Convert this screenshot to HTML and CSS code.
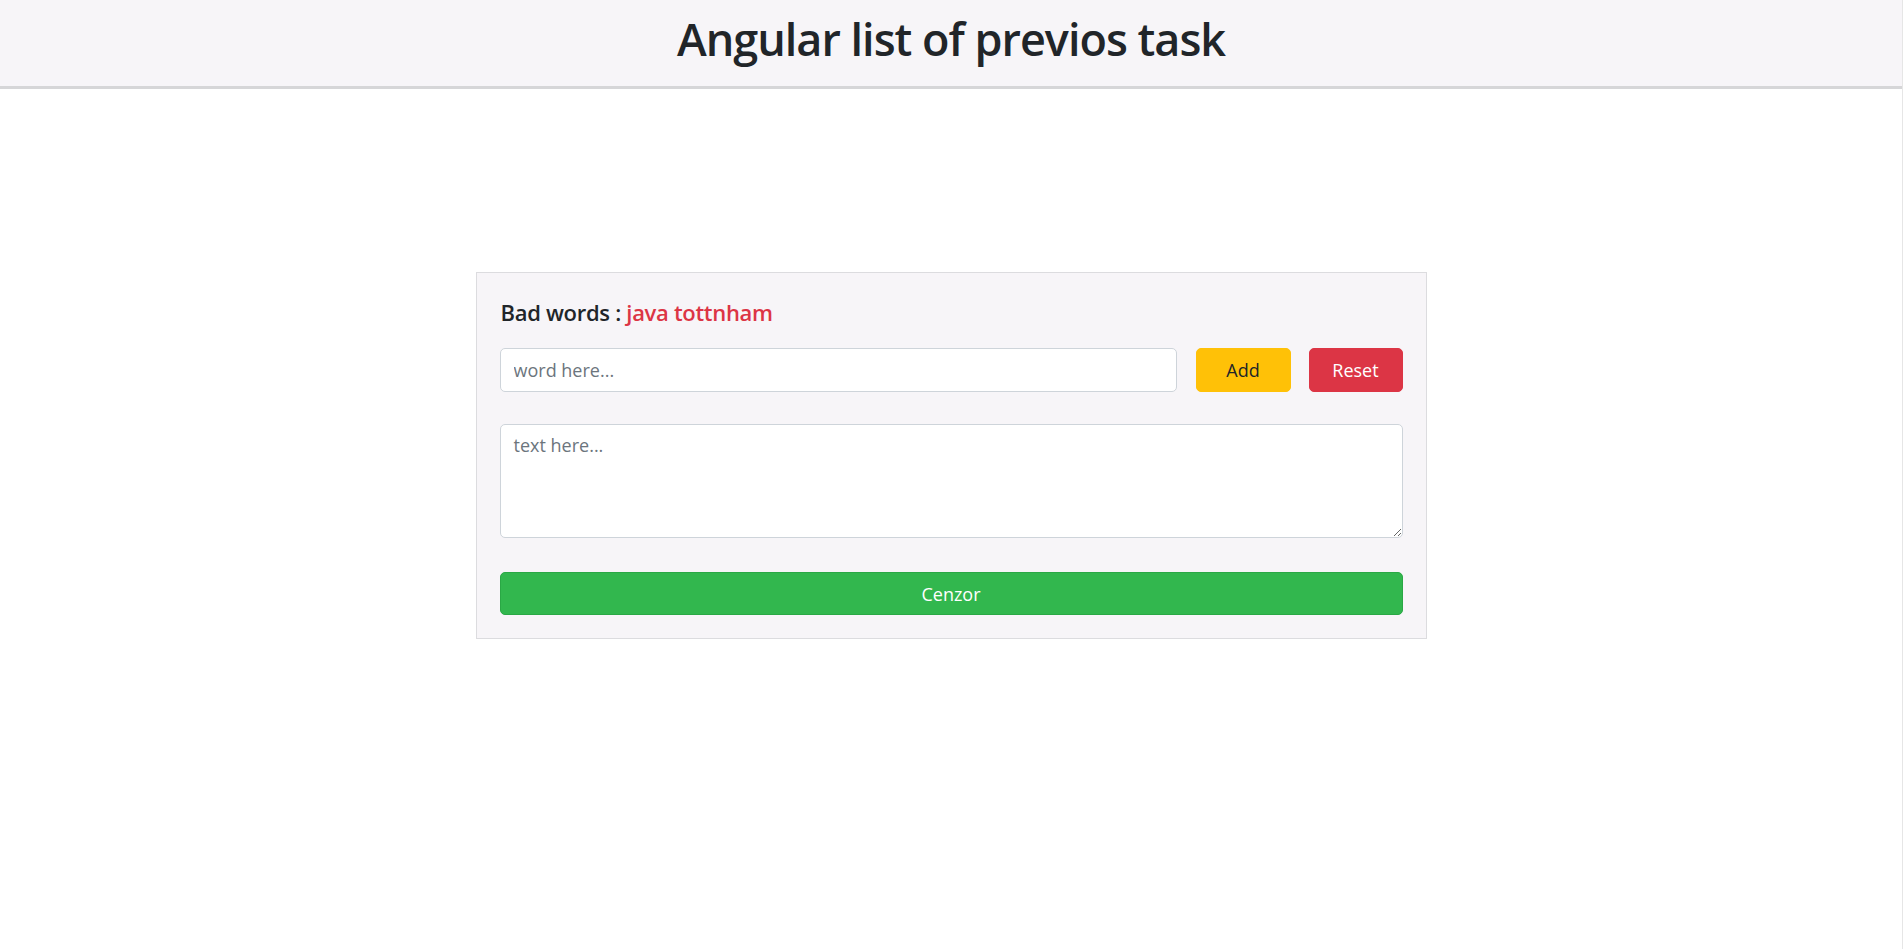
FILE: index.html
```html
<!DOCTYPE html>
<html lang="en">
<head>
<meta charset="utf-8">
<title>Angular list of previos task</title>
<link rel="stylesheet" href="styles.css">
</head>
<body>
<div class="page">
  <header class="topbar">
    <h1 class="title">Angular list of previos task</h1>
  </header>
  <main class="main">
    <section class="card">
      <h5 class="bad-title">Bad words : <span class="bad-list">java tottnham</span></h5>
      <div class="word-row">
        <input class="field word-input" type="text" placeholder="word here...">
        <button class="btn btn-add" type="button">Add</button>
        <button class="btn btn-reset" type="button">Reset</button>
      </div>
      <textarea class="field text-area" placeholder="text here..."></textarea>
      <button class="btn btn-cenzor" type="button">Cenzor</button>
    </section>
  </main>
</div>
</body>
</html>
```

FILE: styles.css
```css
* { box-sizing: border-box; }
html, body { margin: 0; padding: 0; }
body {
  font-family: "Open Sans", "Noto Sans", "Liberation Sans", sans-serif;
  color: #212529;
  background: #ffffff;
}
.page {
  min-height: 949px;
  border-right: 1px solid #e6e6e6;
}
.topbar {
  height: 89px;
  background: #f7f5f8;
  border-bottom: 3px solid #d6d6d8;
  display: flex;
  align-items: center;
  justify-content: center;
  padding-bottom: 9px;
}
.title {
  margin: 0;
  font-size: 45px;
  font-weight: 600;
  line-height: 1.2;
  letter-spacing: -1px;
}
.main {
  display: flex;
  justify-content: center;
  padding-top: 183px;
}
.card {
  width: 951px;
  background: #f7f5f8;
  border: 1px solid #dcdcdf;
  padding: 25px 23px 23px 23px;
  display: flex;
  flex-direction: column;
}
.bad-title {
  margin: 0 0 22px 1px;
  font-size: 22px;
  font-weight: 600;
  line-height: 28px;
  letter-spacing: -0.3px;
}
.bad-list { color: #dc3545; }
.word-row {
  display: flex;
  gap: 19px;
  height: 44px;
}
.field {
  font-family: inherit;
  font-size: 18px;
  color: #212529;
  background: #ffffff;
  border: 1px solid #ced4da;
  border-radius: 5px;
  padding: 7px 13px;
  outline: none;
}
.field::placeholder { color: #6c757d; }
.word-input { flex: 1; min-width: 0; }
.text-area {
  margin-top: 32px;
  height: 114px;
  resize: vertical;
  line-height: 1.5;
}
.btn {
  font-family: inherit;
  font-size: 18px;
  border: 1px solid transparent;
  border-radius: 5px;
  cursor: pointer;
  padding: 0;
}
.btn-add {
  width: 95px;
  background: #ffc107;
  border-color: #ffc107;
  color: #212529;
}
.btn-reset {
  width: 94px;
  margin-left: -1px;
  background: #dc3545;
  border-color: #dc3545;
  color: #ffffff;
}
.btn-cenzor {
  margin-top: 34px;
  height: 43px;
  background: #32b74e;
  border-color: #2aa845;
  color: #ffffff;
}
```
